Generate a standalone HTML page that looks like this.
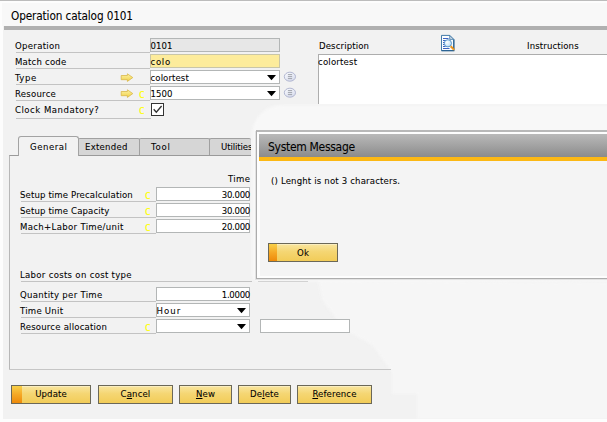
<!DOCTYPE html>
<html>
<head>
<meta charset="utf-8">
<title>Operation catalog 0101</title>
<style>
*{box-sizing:border-box;margin:0;padding:0}
html,body{width:607px;height:422px;overflow:hidden;background:#fdfdfd}
body{position:relative;font-family:"DejaVu Sans Condensed","Liberation Sans",sans-serif;font-size:9.5px;color:#000;line-height:12px;letter-spacing:0.13px;-webkit-text-stroke:0.07px #000}
.abs{position:absolute}
#win{position:absolute;left:3px;top:26px;width:606px;height:393px;background:#f2f2f2}
#topline{position:absolute;left:0;top:0;width:607px;height:1px;background:#bcbcbc}
#tbar{position:absolute;left:2px;top:3px;width:606px;height:23px;background:#f8f8f8}
#title{position:absolute;left:11px;top:9px;font-size:11.7px;line-height:14px;letter-spacing:-0.12px;color:#000;white-space:nowrap}
#band{position:absolute;left:4px;top:26px;width:603px;height:4px;background:#b0b0b0}
.lbl{position:absolute;white-space:nowrap;height:12px;line-height:12px;font-size:9.5px}
.ul{position:absolute;height:1px;background:#c3c3c3}
.fld{position:absolute;height:14px;border:1px solid #b3b6b6;background:#fff;font-size:9.5px;line-height:14px;padding:0 1px 0 0;white-space:nowrap;text-indent:-0.5px;letter-spacing:0.1px}
.fld.r{text-align:right;padding-right:0;letter-spacing:-0.27px;text-indent:0}
.fld.r::after{content:"";display:inline-block;margin-right:-1px}
.dd{position:absolute;width:0;height:0;border-left:5px solid transparent;border-right:5px solid transparent;border-top:5px solid #111}
.c{position:absolute;color:#ffff00;font-family:"DejaVu Sans Mono","Liberation Mono",monospace;font-size:9.3px;line-height:10px;letter-spacing:0;width:6px;height:10px;-webkit-text-stroke:0.2px #ffff00}
.btn{position:absolute;height:19px;top:385px;border:1px solid #6b6858;background:linear-gradient(#f9e6a0,#f5d673 45%,#f2cc58);font-size:9.5px;line-height:15px;text-align:center;color:#000;white-space:nowrap;box-shadow:inset 0 1px 0 rgba(255,255,255,0.35)}
.btn u{text-decoration:underline}
.btn .or{position:absolute;left:0;top:0;width:10px;height:17px;background:linear-gradient(#f8d048,#f5a826 50%,#ee8a0a)}
.tab{position:absolute;top:138px;height:18px;background:#d6d6d6;border:1px solid #a0a0a0;border-bottom:1px solid #9a9a9a;border-radius:2px 2px 0 0}
</style>
</head>
<body>
<div id="topline"></div>
<div id="tbar"></div>
<div id="win"></div>
<div id="title">Operation catalog 0101</div>
<div id="band"></div>
<!-- glow around dialog -->
<div class="abs" style="left:0;top:0;width:607px;height:419px;overflow:hidden"><div class="abs" style="left:0;top:0;width:640px;height:419px;filter:blur(1.5px)"><div class="abs" style="left:0;top:0;width:640px;height:419px;background:#f6f6f6;clip-path:polygon(318px 280px,640px 282px,640px 419px,417px 419px,417px 394px,392px 394px,392px 372px,372px 345px,345px 330px,322px 300px)"></div></div></div>
<div class="abs" style="left:251px;top:104px;width:356px;height:182px;overflow:hidden"><div class="abs" style="left:1px;top:1px;width:380px;height:176px;background:#f8f8f8;border-radius:30px 0 0 6px;filter:blur(1.5px)"></div></div>

<!-- header labels -->
<div class="lbl" style="left:15px;top:40px;letter-spacing:0.3px">Operation</div>
<div class="lbl" style="left:15px;top:56px;letter-spacing:0.2px">Match code</div>
<div class="lbl" style="left:15px;top:72px;letter-spacing:0.6px">Type</div>
<div class="lbl" style="left:15px;top:88px;letter-spacing:0.25px">Resource</div>
<div class="lbl" style="left:15px;top:104px;letter-spacing:0.5px">Clock Mandatory?</div>
<div class="ul" style="left:16px;top:52px;width:134px"></div>
<div class="ul" style="left:16px;top:68px;width:134px"></div>
<div class="ul" style="left:16px;top:84px;width:134px"></div>
<div class="ul" style="left:16px;top:100px;width:134px"></div>
<div class="ul" style="left:16px;top:118px;width:135px"></div>

<div class="fld" style="left:150px;top:38px;width:130px;background:#e7e7e7">0101</div>
<div class="fld" style="left:150px;top:54px;width:130px;background:#fdec9b;border-color:#c9c6a8;letter-spacing:0.7px">colo</div>
<div class="fld" style="left:150px;top:70px;width:130px">colortest</div>
<div class="fld" style="left:150px;top:86px;width:130px">1500</div>
<svg class="abs" style="left:267px;top:75px" width="9" height="6" viewBox="0 0 9 6"><path d="M0 0h9l-4.5 5.2z" fill="#000"/></svg>
<svg class="abs" style="left:267px;top:91px" width="9" height="6" viewBox="0 0 9 6"><path d="M0 0h9l-4.5 5.2z" fill="#000"/></svg>

<!-- arrows -->
<svg class="abs" style="left:120px;top:73px" width="14" height="10" viewBox="0 0 14 10"><defs><linearGradient id="ag73" x1="0" y1="0" x2="0" y2="1"><stop offset="0" stop-color="#fdf2a8"/><stop offset="1" stop-color="#f1d146"/></linearGradient></defs><path d="M1.2 2.5H7.4V0.8L12.8 4.6 7.4 8.4V6.7H1.2z" fill="url(#ag73)" stroke="#d9b84a" stroke-width="0.8" stroke-linejoin="round"/></svg>
<svg class="abs" style="left:120px;top:89px" width="14" height="10" viewBox="0 0 14 10"><defs><linearGradient id="ag89" x1="0" y1="0" x2="0" y2="1"><stop offset="0" stop-color="#fdf2a8"/><stop offset="1" stop-color="#f1d146"/></linearGradient></defs><path d="M1.2 2.5H7.4V0.8L12.8 4.6 7.4 8.4V6.7H1.2z" fill="url(#ag89)" stroke="#d9b84a" stroke-width="0.8" stroke-linejoin="round"/></svg>

<!-- round link icons -->
<svg class="abs" style="left:283px;top:71px" width="14" height="12" viewBox="0 0 14 12"><defs><linearGradient id="rg71" x1="0" y1="0" x2="0.6" y2="1"><stop offset="0" stop-color="#fbfcfe"/><stop offset="1" stop-color="#dadeee"/></linearGradient></defs><ellipse cx="6.9" cy="5.7" rx="5.6" ry="4.5" fill="url(#rg71)" stroke="#aab0cc" stroke-width="0.9"/><path d="M4.9 3.6h4.2M4.9 5.6h4.2M4.9 7.6h4.2" stroke="#94979f" stroke-width="0.85"/></svg>
<svg class="abs" style="left:283px;top:87px" width="14" height="12" viewBox="0 0 14 12"><defs><linearGradient id="rg87" x1="0" y1="0" x2="0.6" y2="1"><stop offset="0" stop-color="#fbfcfe"/><stop offset="1" stop-color="#dadeee"/></linearGradient></defs><ellipse cx="6.9" cy="5.7" rx="5.6" ry="4.5" fill="url(#rg87)" stroke="#aab0cc" stroke-width="0.9"/><path d="M4.9 3.6h4.2M4.9 5.6h4.2M4.9 7.6h4.2" stroke="#94979f" stroke-width="0.85"/></svg>

<div class="c" style="left:139px;top:90px">C</div>
<div class="c" style="left:139px;top:106px">C</div>

<!-- checkbox -->
<div class="abs" style="left:151px;top:103px;width:13px;height:13px;border:1px solid #333;background:#fff"></div>
<svg class="abs" style="left:151px;top:103px" width="13" height="13" viewBox="0 0 13 13"><path d="M2.7 6.3l2.6 3 5.3-6.3" fill="none" stroke="#333" stroke-width="1.35"/></svg>

<!-- description -->
<div class="lbl" style="left:319px;top:40px">Description</div>
<div class="lbl" style="left:527px;top:40px">Instructions</div>
<div class="abs" style="left:318px;top:54px;width:300px;height:50px;background:#fff;border:1px solid #adadad;border-bottom:none"></div>
<div class="lbl" style="left:318px;top:56px;letter-spacing:0.2px">colortest</div>

<!-- doc icon -->
<svg class="abs" style="left:440px;top:34px" width="16" height="18" viewBox="0 0 16 18">
<defs><radialGradient id="lens" cx="0.38" cy="0.35" r="0.75"><stop offset="0" stop-color="#ffffff"/><stop offset="0.55" stop-color="#d4eafa"/><stop offset="1" stop-color="#a9d2f0"/></radialGradient></defs>
<path d="M1.5 1.4h8.2l4 4v11.2h-12.2z" fill="#fcfdfe" stroke="#2d6c9f" stroke-width="0.9"/>
<path d="M13.9 5.6v11.2h-12.4" fill="none" stroke="#1f5a8a" stroke-width="1.1"/>
<path d="M9.7 1.4v4h4z" fill="#cfdbe6" stroke="#2d6c9f" stroke-width="0.7"/>
<path d="M3 4.5h5.5M3 6.5h3M3 8.5h1.6M3 10.5h1.6M3 12.5h2.6M3 14.5h6.5" stroke="#3d63c2" stroke-width="1"/>
<circle cx="7.9" cy="9.3" r="3.6" fill="url(#lens)" stroke="#4f8fc4" stroke-width="0.9"/>
<path d="M10.7 12.3l3.5 3.6" stroke="#e8860c" stroke-width="2"/>
<path d="M10.9 12.5l3.3 3.4" stroke="#f9d867" stroke-width="0.9" stroke-dasharray="0.9 0.9"/>
</svg>

<!-- tabs -->
<div class="tab" style="left:78px;width:62px"></div>
<div class="tab" style="left:139px;width:71px"></div>
<div class="tab" style="left:209px;width:42px;border-right:none"></div>
<div class="abs" style="left:9px;top:155px;width:242px;height:215px;border-top:1px solid #9a9a9a;border-left:1px solid #b7b7b7"></div>
<div class="abs" style="left:9px;top:369px;width:382px;height:1px;background:#c6c6c6"></div>
<div class="abs" style="left:18px;top:136px;width:61px;height:20px;border:1px solid #a3a3a3;border-bottom:none;border-radius:3px 3px 0 0;background:#f2f2f2"></div>
<div class="lbl" style="left:30px;top:141px;letter-spacing:0.55px">General</div>
<div class="lbl" style="left:85px;top:141px;letter-spacing:0.25px">Extended</div>
<div class="lbl" style="left:151px;top:141px;letter-spacing:0.8px">Tool</div>
<div class="lbl" style="left:221px;top:141px;width:30px;overflow:hidden;letter-spacing:-0.1px">Utilities</div>

<!-- general tab content -->
<div class="lbl" style="left:228px;top:173px;letter-spacing:0.4px">Time</div>
<div class="lbl" style="left:20px;top:189px;letter-spacing:0.13px">Setup time Precalculation</div>
<div class="lbl" style="left:20px;top:205px;letter-spacing:0.13px">Setup time Capacity</div>
<div class="lbl" style="left:20px;top:221px;letter-spacing:0.33px">Mach+Labor Time/unit</div>
<div class="ul" style="left:21px;top:201px;width:135px"></div>
<div class="ul" style="left:21px;top:217px;width:135px"></div>
<div class="ul" style="left:21px;top:233px;width:135px"></div>
<div class="c" style="left:145px;top:191px">C</div>
<div class="c" style="left:145px;top:207px">C</div>
<div class="c" style="left:145px;top:223px">C</div>
<div class="fld r" style="left:156px;top:187px;width:94px">30.000</div>
<div class="fld r" style="left:156px;top:203px;width:94px">30.000</div>
<div class="fld r" style="left:156px;top:219px;width:94px">20.000</div>

<div class="lbl" style="left:20px;top:269px;letter-spacing:0.3px">Labor costs on cost type</div>
<div class="ul" style="left:21px;top:281px;width:231px"></div>
<div class="lbl" style="left:20px;top:289px;letter-spacing:0.3px">Quantity per Time</div>
<div class="lbl" style="left:20px;top:305px;letter-spacing:0.25px">Time Unit</div>
<div class="lbl" style="left:20px;top:321px;letter-spacing:0.2px">Resource allocation</div>
<div class="ul" style="left:21px;top:301px;width:135px"></div>
<div class="ul" style="left:21px;top:317px;width:135px"></div>
<div class="ul" style="left:21px;top:333px;width:135px"></div>
<div class="c" style="left:145px;top:323px">C</div>
<div class="fld r" style="left:156px;top:287px;width:94px">1.0000</div>
<div class="fld" style="left:156px;top:303px;width:94px;letter-spacing:1.1px">Hour</div>
<div class="fld" style="left:156px;top:319px;width:94px"></div>
<svg class="abs" style="left:237px;top:308px" width="9" height="6" viewBox="0 0 9 6"><path d="M0 0h9l-4.5 5.2z" fill="#000"/></svg>
<svg class="abs" style="left:237px;top:324px" width="9" height="6" viewBox="0 0 9 6"><path d="M0 0h9l-4.5 5.2z" fill="#000"/></svg>
<div class="fld" style="left:260px;top:319px;width:90px"></div>

<!-- bottom buttons -->
<div class="btn" style="left:11px;width:80px"><span class="or"></span>Update</div>
<div class="btn" style="left:98px;width:75px">C<u>a</u>ncel</div>
<div class="btn" style="left:179px;width:53px"><u>N</u>ew</div>
<div class="btn" style="left:238px;width:53px">De<u>l</u>ete</div>
<div class="btn" style="left:297px;width:75px"><u>R</u>eference</div>


<div class="ul" style="left:258px;top:281px;width:50px;background:#d2d2d2"></div>
<!-- system message dialog -->
<div class="abs" style="left:256px;top:130px;width:360px;height:149px;border-top:2px solid #b8b8b8;border-left:1px solid #acacac;border-bottom:1px solid #adadad;background:#fdfdfd;box-shadow:-1px 1px 0 #e2e2e2"></div>
<div class="abs" style="left:260px;top:134px;width:350px;height:142px;background:#f4f4f4"></div>
<div class="abs" style="left:259px;top:134px;width:350px;height:23px;background:linear-gradient(#b9b9b9,#a5a5a5 45%,#8b8b8b)"></div>
<div class="abs" style="left:259px;top:157px;width:350px;height:4px;background:#fcb814"></div>
<div class="abs" style="left:268px;top:140px;font-size:12px;line-height:14px;letter-spacing:-0.3px;white-space:nowrap;color:#000">System Message</div>
<div class="lbl" style="left:271px;top:175px;letter-spacing:0.17px">() Lenght is not 3 characters.</div>
<div class="btn" style="left:268px;top:243px;width:70px"><span class="or" style="width:8px"></span><span style="position:relative;top:1px">Ok</span></div>
</body>
</html>
